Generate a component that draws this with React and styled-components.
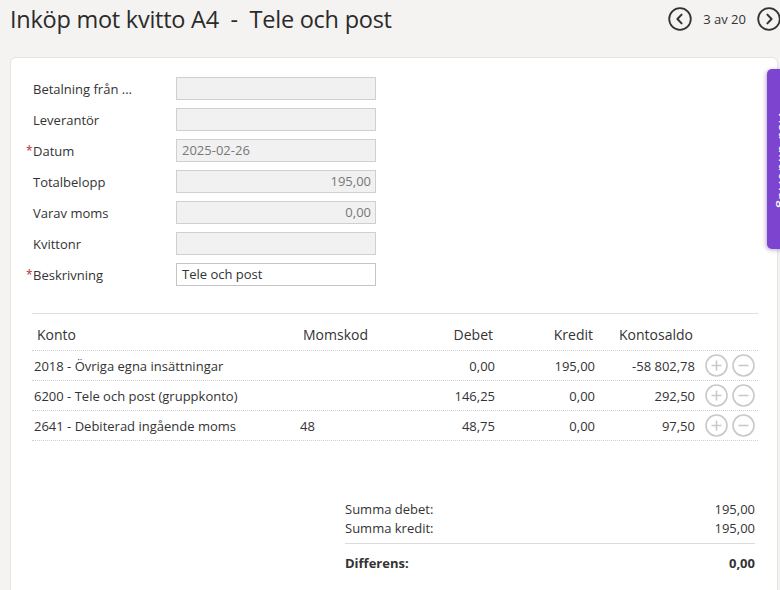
import React from "react";
import styled, { createGlobalStyle } from "styled-components";

const GlobalStyle = createGlobalStyle`
  html, body {
    margin: 0;
    padding: 0;
    background: #f4f3f1;
    font-family: "Open Sans", "Noto Sans", sans-serif;
    color: #333;
    overflow: hidden;
  }
  * { box-sizing: border-box; }
`;

const formRows = [
  { label: "Betalning från ...", value: "", disabled: true },
  { label: "Leverantör", value: "", disabled: true },
  { label: "Datum", value: "2025-02-26", disabled: true, required: true },
  { label: "Totalbelopp", value: "195,00", disabled: true, right: true },
  { label: "Varav moms", value: "0,00", disabled: true, right: true },
  { label: "Kvittonr", value: "", disabled: true },
  { label: "Beskrivning", value: "Tele och post", required: true },
];

const rows = [
  { konto: "2018 - Övriga egna insättningar", moms: "", debet: "0,00", kredit: "195,00", saldo: "-58 802,78" },
  { konto: "6200 - Tele och post (gruppkonto)", moms: "", debet: "146,25", kredit: "0,00", saldo: "292,50" },
  { konto: "2641 - Debiterad ingående moms", moms: "48", debet: "48,75", kredit: "0,00", saldo: "97,50" },
];

const App = () => {
  return (
    <Page>
      <GlobalStyle />
      <TopBar>
        <Title>Inköp mot kvitto A4&nbsp; - &nbsp;Tele och post</Title>
        <Pager>
          <NavButton aria-label="Föregående">
            <svg width="24" height="24" viewBox="0 0 24 24">
              <circle cx="12" cy="12" r="10.8" fill="none" stroke="#333" strokeWidth="1.8" />
              <path d="M13.6 7.6 L9.4 12 L13.6 16.4" fill="none" stroke="#333" strokeWidth="2" strokeLinecap="round" strokeLinejoin="round" />
            </svg>
          </NavButton>
          <PagerText>3 av 20</PagerText>
          <NavButton aria-label="Nästa">
            <svg width="24" height="24" viewBox="0 0 24 24">
              <circle cx="12" cy="12" r="10.8" fill="none" stroke="#333" strokeWidth="1.8" />
              <path d="M10.4 7.6 L14.6 12 L10.4 16.4" fill="none" stroke="#333" strokeWidth="2" strokeLinecap="round" strokeLinejoin="round" />
            </svg>
          </NavButton>
        </Pager>
      </TopBar>

      <Card>
        <Form>
          {formRows.map((r) => (
            <FormRow key={r.label}>
              <Label>
                <Star>{r.required ? "*" : ""}</Star>
                {r.label}
              </Label>
              <Input $disabled={r.disabled} $right={r.right}>
                {r.value}
              </Input>
            </FormRow>
          ))}
        </Form>

        <Table>
          <HeadRow>
            <HeadCell>Konto</HeadCell>
            <HeadCell>Momskod</HeadCell>
            <HeadCell $right>Debet</HeadCell>
            <HeadCell $right>Kredit</HeadCell>
            <HeadCell $right>Kontosaldo</HeadCell>
            <HeadCell />
          </HeadRow>
          {rows.map((r) => (
            <BodyRow key={r.konto}>
              <Cell>{r.konto}</Cell>
              <Cell>{r.moms}</Cell>
              <Cell $right>{r.debet}</Cell>
              <Cell $right>{r.kredit}</Cell>
              <Cell $right>{r.saldo}</Cell>
              <Actions>
                <RoundIcon aria-label="Lägg till rad">
                  <svg width="23" height="23" viewBox="0 0 23 23">
                    <circle cx="11.5" cy="11.5" r="10.5" fill="none" stroke="#c9c9c9" strokeWidth="1.6" />
                    <path d="M11.5 6.5 V16.5 M6.5 11.5 H16.5" stroke="#c9c9c9" strokeWidth="1.6" />
                  </svg>
                </RoundIcon>
                <RoundIcon aria-label="Ta bort rad">
                  <svg width="23" height="23" viewBox="0 0 23 23">
                    <circle cx="11.5" cy="11.5" r="10.5" fill="none" stroke="#c9c9c9" strokeWidth="1.6" />
                    <path d="M6.5 11.5 H16.5" stroke="#c9c9c9" strokeWidth="1.6" />
                  </svg>
                </RoundIcon>
              </Actions>
            </BodyRow>
          ))}
        </Table>

        <Summary>
          <SumRow>
            <span>Summa debet:</span>
            <span>195,00</span>
          </SumRow>
          <SumRow>
            <span>Summa kredit:</span>
            <span>195,00</span>
          </SumRow>
          <SumDivider />
          <SumRow $bold>
            <span>Differens:</span>
            <span>0,00</span>
          </SumRow>
        </Summary>
      </Card>

      <SideTab>
        <SideTabText>Visa underlag</SideTabText>
      </SideTab>
    </Page>
  );
};

const Page = styled.div`
  position: relative;
  width: 780px;
  height: 590px;
  overflow: hidden;
`;

const TopBar = styled.header`
  display: flex;
  justify-content: space-between;
  align-items: center;
  height: 57px;
  padding: 0 0 20px 10px;
`;

const Title = styled.h1`
  margin: 0;
  font-size: 23.5px;
  font-weight: 400;
  color: #2b2b2b;
  letter-spacing: -0.25px;
  white-space: pre;
`;

const Pager = styled.div`
  display: flex;
  align-items: center;
  gap: 10px;
  margin-right: -1px;
`;

const NavButton = styled.button`
  display: flex;
  padding: 0;
  border: none;
  background: none;
  cursor: pointer;
`;

const PagerText = styled.span`
  font-size: 13px;
  color: #333;
  margin: 0 1px;
`;

const Card = styled.main`
  margin-left: 10px;
  width: 768px;
  min-height: 560px;
  background: #fff;
  border: 1px solid #e6e4e1;
  border-radius: 6px 6px 0 0;
  padding: 19px 19px 0 21px;
`;

const Form = styled.div`
  display: flex;
  flex-direction: column;
  gap: 8px;
  margin-left: -6px;
`;

const FormRow = styled.div`
  display: flex;
  align-items: center;
  height: 23px;
`;

const Label = styled.div`
  width: 150px;
  font-size: 13px;
  color: #333;
  display: flex;
`;

const Star = styled.span`
  width: 7px;
  color: #c0282d;
  font-size: 12px;
`;

const Input = styled.div`
  width: 200px;
  height: 23px;
  border: 1px solid ${(p) => (p.$disabled ? "#cfcfcf" : "#c4c4c4")};
  background: ${(p) => (p.$disabled ? "#f1f1f1" : "#fff")};
  color: ${(p) => (p.$disabled ? "#777" : "#333")};
  font-size: 13px;
  line-height: 21px;
  padding: 0 4px 0 5px;
  text-align: ${(p) => (p.$right ? "right" : "left")};
`;

const Table = styled.div`
  margin-top: 27px;
  border-top: 1px solid #dedede;
`;

const columns = "266px 100px 97px 100px 100px 1fr";

const HeadRow = styled.div`
  display: grid;
  grid-template-columns: ${columns};
  height: 37px;
  padding-top: 5px;
  align-items: center;
  border-bottom: 1px dotted #cfcfcf;
`;

const HeadCell = styled.div`
  font-size: 14px;
  color: #333;
  padding: ${(p) => (p.$right ? "0 2px 0 0" : "0 0 0 5px")};
  text-align: ${(p) => (p.$right ? "right" : "left")};
`;

const BodyRow = styled.div`
  display: grid;
  grid-template-columns: ${columns};
  height: 30px;
  align-items: center;
  border-bottom: 1px dotted #cfcfcf;
`;

const Cell = styled.div`
  font-size: 13px;
  color: #333;
  padding: ${(p) => (p.$right ? "0" : "0 0 0 2px")};
  text-align: ${(p) => (p.$right ? "right" : "left")};
  white-space: nowrap;
`;

const Actions = styled.div`
  display: flex;
  gap: 4px;
  padding-left: 10px;
`;

const RoundIcon = styled.button`
  display: flex;
  padding: 0;
  border: none;
  background: none;
  cursor: pointer;
`;

const Summary = styled.div`
  margin: 58px 3px 0 313px;
  font-size: 13px;
`;

const SumRow = styled.div`
  display: flex;
  justify-content: space-between;
  height: 19px;
  align-items: center;
  font-weight: ${(p) => (p.$bold ? 700 : 400)};
  color: #333;
`;

const SumDivider = styled.div`
  border-top: 1px solid #dcdcdc;
  margin: 6px 0 9px;
`;

const SideTab = styled.aside`
  position: absolute;
  top: 69px;
  left: 767px;
  width: 40px;
  height: 180px;
  background: #7c44cf;
  border-radius: 5px 0 0 5px;
  box-shadow: -1px 1px 4px rgba(60, 20, 110, 0.35);
  overflow: hidden;
`;

const SideTabText = styled.div`
  position: absolute;
  top: 42px;
  left: 7.5px;
  writing-mode: vertical-rl;
  color: #fff;
  font-size: 12px;
  font-weight: 600;
  letter-spacing: 1.5px;
`;

export default App;
